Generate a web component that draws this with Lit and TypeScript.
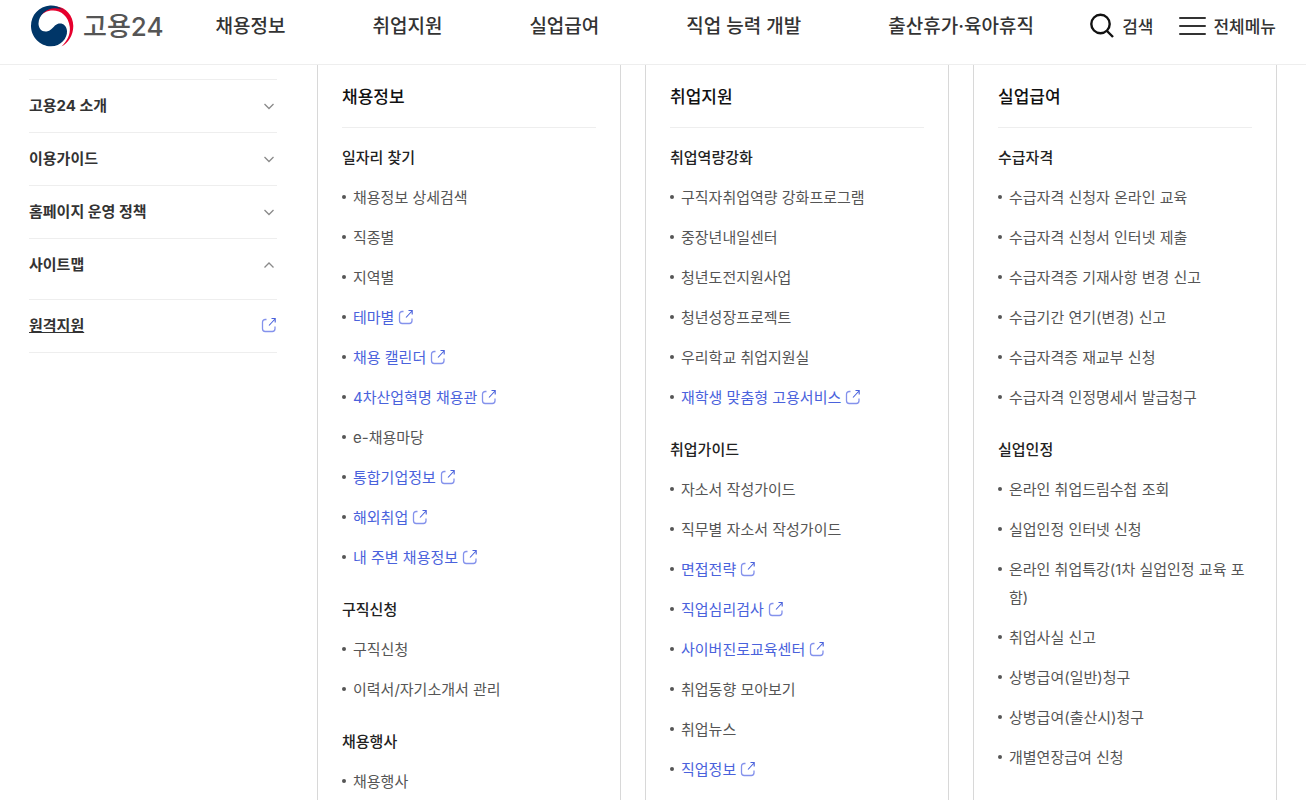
import { LitElement, html, css, svg } from "lit";
import { customElement } from "lit/decorators.js";

type Item = string | { ext: string };
interface Group { title: string; items: Item[]; }
interface Column { title: string; groups: Group[]; }

const x = (ext: string): Item => ({ ext });

const NAV = ["채용정보", "취업지원", "실업급여", "직업 능력 개발", "출산휴가·육아휴직"];

const SIDE = ["고용24 소개", "이용가이드", "홈페이지 운영 정책", "사이트맵"];

const COLUMNS: Column[] = [
  {
    title: "채용정보",
    groups: [
      {
        title: "일자리 찾기",
        items: ["채용정보 상세검색", "직종별", "지역별", x("테마별"), x("채용 캘린더"), x("4차산업혁명 채용관"),
          "e-채용마당", x("통합기업정보"), x("해외취업"), x("내 주변 채용정보")],
      },
      { title: "구직신청", items: ["구직신청", "이력서/자기소개서 관리"] },
      { title: "채용행사", items: ["채용행사"] },
    ],
  },
  {
    title: "취업지원",
    groups: [
      {
        title: "취업역량강화",
        items: ["구직자취업역량 강화프로그램", "중장년내일센터", "청년도전지원사업", "청년성장프로젝트",
          "우리학교 취업지원실", x("재학생 맞춤형 고용서비스")],
      },
      {
        title: "취업가이드",
        items: ["자소서 작성가이드", "직무별 자소서 작성가이드", x("면접전략"), x("직업심리검사"),
          x("사이버진로교육센터"), "취업동향 모아보기", "취업뉴스", x("직업정보")],
      },
    ],
  },
  {
    title: "실업급여",
    groups: [
      {
        title: "수급자격",
        items: ["수급자격 신청자 온라인 교육", "수급자격 신청서 인터넷 제출", "수급자격증 기재사항 변경 신고",
          "수급기간 연기(변경) 신고", "수급자격증 재교부 신청", "수급자격 인정명세서 발급청구"],
      },
      {
        title: "실업인정",
        items: ["온라인 취업드림수첩 조회", "실업인정 인터넷 신청", "온라인 취업특강(1차 실업인정 교육 포함)",
          "취업사실 신고", "상병급여(일반)청구", "상병급여(출산시)청구", "개별연장급여 신청"],
      },
    ],
  },
];

const externalIcon = html`<svg class="ext" viewBox="0 0 16 16" width="16" height="16" aria-hidden="true">
  ${svg`<path class="box" d="M5.500 2.500H4.200A2.700 2.700 0 0 0 1.500 5.200v6.600a2.700 2.700 0 0 0 2.700 2.700h7.100a2.700 2.700 0 0 0 2.700-2.700V9.500" />
  <path d="M8 8.500l6-6.500M10.500 1.500h3.700v4" />`}
</svg>`;

const chevron = (up: boolean) => html`<svg class="chev" viewBox="0 0 16 16" width="16" height="16" aria-hidden="true">
  <path d=${up ? "M3.500 10.500L8 6l4.500 4.500" : "M3.500 6L8 10.500 12.500 6"} />
</svg>`;

@customElement("app-root")
export class AppRoot extends LitElement {
  static styles = css`
    :host {
      display: block;
      height: 100vh;
      overflow: hidden;
      background: #fff;
      color: #333;
      font-family: Inter, "Noto Sans CJK KR", sans-serif;
      font-size: 15px;
      line-height: 28px;
    }
    * { box-sizing: border-box; }
    a { color: inherit; text-decoration: none; }
    ul { list-style: none; margin: 0; padding: 0; }
    h2, h3 { margin: 0; }
    button {
      font: inherit;
      color: inherit;
      background: none;
      border: 0;
      padding: 0;
      cursor: pointer;
    }
    svg { flex: none; fill: none; }

    .header {
      display: flex;
      align-items: center;
      height: 65px;
      padding: 0 30px 12px;
      border-bottom: 1px solid #eee;
    }
    .header span, .nav { padding-top: 2px; }
    .logo {
      display: flex;
      align-items: center;
      gap: 9px;
      color: #555;
      font-size: 26px;
      font-weight: 500;
      white-space: nowrap;
    }
    .nav { flex: 1; padding-left: 52px; }
    .nav ul { display: flex; gap: 87px; }
    .nav li { font-size: 19px; font-weight: 500; white-space: nowrap; }
    .tools { display: flex; gap: 26px; }
    .tool {
      display: flex;
      align-items: center;
      gap: 7px;
      font-size: 17px;
      font-weight: 500;
      white-space: nowrap;
    }

    .body {
      display: grid;
      grid-template-columns: 248px minmax(0, 1fr);
      gap: 40px;
      padding: 0 29px;
    }
    .side { margin-top: 14px; border-top: 1px solid #eee; }
    .row {
      display: flex;
      align-items: center;
      justify-content: space-between;
      width: 100%;
      height: 53px;
      padding-bottom: 1px;
      border-bottom: 1px solid #eee;
      font-weight: 700;
    }
    .row.open { height: 61px; padding-bottom: 9px; }
    .row .label-link { text-decoration: underline; }
    .chev { stroke: #8a8a8a; stroke-width: 1.3; }
    .ext { margin-bottom: 2px; stroke: #4a62dc; stroke-width: 1.1; }
    .ext .box { stroke: #8492ec; stroke-width: 1.3; }

    .columns { display: grid; grid-template-columns: repeat(3, minmax(0, 1fr)); gap: 24px; }
    .column { border: 1px solid #d8d8d8; border-width: 0 1px; padding: 0 24px 40px; }
    .column h2 {
      height: 63px;
      padding-top: 18px;
      border-bottom: 1px solid #eee;
      color: #111;
      font-size: 17px;
      font-weight: 500;
    }
    .group { padding-top: 16px; }
    .group + .group { padding-top: 24px; }
    .group h3 { font-size: 15px; font-weight: 500; color: #222; }
    .group li {
      display: flex;
      gap: 7px;
      margin-top: 12px;
      color: #555;
      word-break: break-all;
    }
    .group li::before {
      content: "";
      flex: none;
      width: 4px;
      height: 4px;
      margin-top: 11px;
      border-radius: 50%;
      background: #555;
    }
    .group .out { display: flex; align-items: center; gap: 4px; color: #4a62dc; }
  `;

  private item(i: Item) {
    return typeof i === "string"
      ? html`<li><a href="#">${i}</a></li>`
      : html`<li><a class="out" href="#">${i.ext}${externalIcon}</a></li>`;
  }

  render() {
    return html`
      <header class="header">
        <a class="logo" href="#">
          <svg width="44" height="44" viewBox="0 0 44 44" aria-hidden="true">
            <path fill="#e6002d" d="M9 14C12 7 18 3 26 2.500 36 3 43.300 12 43.300 22 43.300 31 38.500 39 31.500 42.500 37 37 40.500 31 39.800 23 38.500 12 31 6.500 23 6.500 17 6.500 12 9 9 14z" />
            <path fill="#003668" d="M34 6.500C29 2.500 24 1.300 20 1.600 9 2.500 1 11 1 22 1 33 10 42.300 21 42.300 31 42.300 37.500 34 37 27 36.500 21 32 18.500 27.500 20 23.500 21.500 22.500 26 17.500 27.300 12 28.500 8.500 24.500 8.500 19.500 9 11 16 4.500 25 4.300 29 4.300 31.500 5 34 6.500z" />
          </svg>
          <span>고용24</span>
        </a>
        <nav class="nav" aria-label="주 메뉴">
          <ul>${NAV.map((n) => html`<li><a href="#">${n}</a></li>`)}</ul>
        </nav>
        <div class="tools">
          <button class="tool" type="button">
            <svg width="26" height="26" viewBox="0 0 26 26" stroke="#111" stroke-width="2.400" aria-hidden="true">
              <circle cx="11.500" cy="11" r="9.200" /><path d="M17.500 17.500l6.500 6.500" />
            </svg>
            <span>검색</span>
          </button>
          <button class="tool" type="button">
            <svg width="27" height="20" viewBox="0 0 27 20" stroke="#333" stroke-width="2" stroke-linecap="round" aria-hidden="true">
              <path d="M1 2h25M1 10h25M1 18h25" />
            </svg>
            <span>전체메뉴</span>
          </button>
        </div>
      </header>
      <main class="body">
        <aside class="side">
          ${SIDE.map((s, i) => {
            const open = i === SIDE.length - 1;
            return html`<button class="row ${open ? "open" : ""}" type="button" aria-expanded=${open}>
              <span>${s}</span>${chevron(open)}
            </button>`;
          })}
          <a class="row" href="#"><span class="label-link">원격지원</span>${externalIcon}</a>
        </aside>
        <div class="columns">
          ${COLUMNS.map((c) => html`<section class="column">
            <h2>${c.title}</h2>
            ${c.groups.map((g) => html`<div class="group">
              <h3>${g.title}</h3>
              <ul>${g.items.map((i) => this.item(i))}</ul>
            </div>`)}
          </section>`)}
        </div>
      </main>
    `;
  }
}
